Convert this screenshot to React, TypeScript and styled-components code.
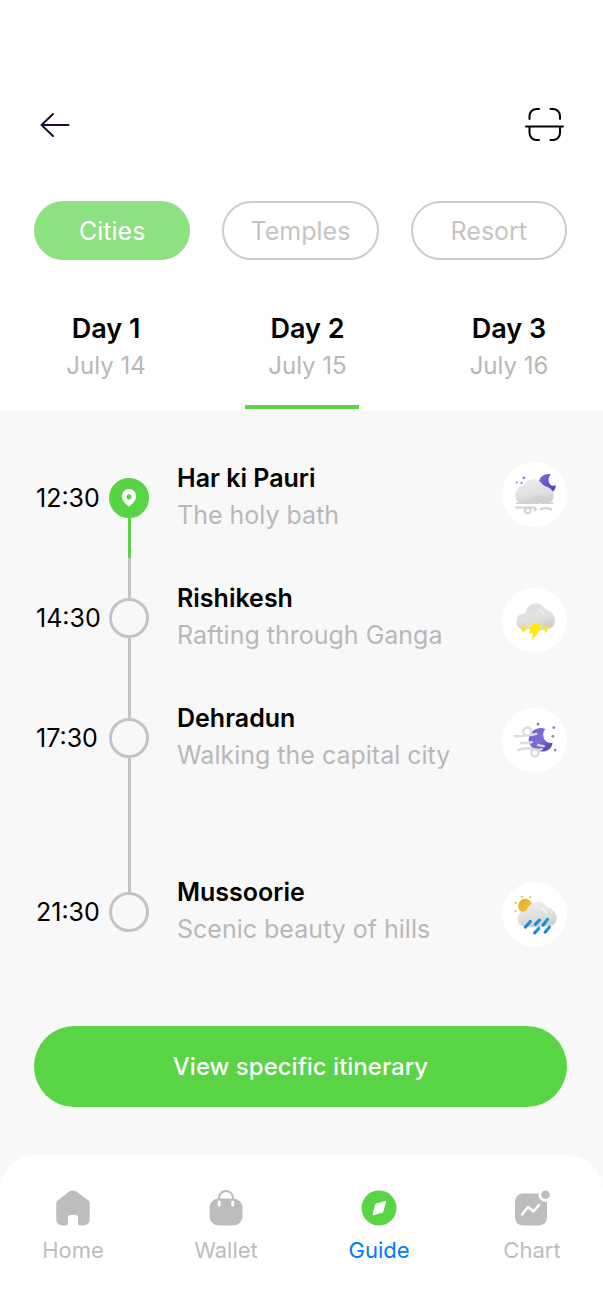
import React, { useState } from "react";
import styled, { createGlobalStyle } from "styled-components";

const GlobalStyle = createGlobalStyle`
  *, *::before, *::after { box-sizing: border-box; }
  body {
    margin: 0;
    background: #f8f8f8;
    color: #000;
    font-family: Inter, "Liberation Sans", sans-serif;
  }
  button { font: inherit; padding: 0; border: 0; background: none; cursor: pointer; }
`;

const Page = styled.div`
  display: flex;
  flex-direction: column;
  min-height: 100vh;
`;

const Top = styled.header`
  background: #fff;
  padding-top: 100px;
`;

const TopBar = styled.div`
  display: flex;
  justify-content: space-between;
  align-items: center;
  height: 50px;
  padding: 0 38px 0 36px;
`;

const IconButton = styled.button`
  display: flex;
`;

const Filters = styled.div`
  display: grid;
  grid-template-columns: repeat(3, 1fr);
  gap: 32px;
  padding: 51px 36px 0 34px;
`;

const Pill = styled.button<{ $active: boolean }>`
  height: 59px;
  border: 2px solid ${(p) => (p.$active ? "#8ee182" : "#cbcbcb")};
  border-radius: 30px;
  background: ${(p) => (p.$active ? "#8ee182" : "#fff")};
  color: ${(p) => (p.$active ? "#fff" : "#c4c4c4")};
  font-size: 25px;
  line-height: 36px;
`;

const Days = styled.div`
  display: flex;
  justify-content: space-between;
  padding: 50px 54px 0 66px;
`;

const Day = styled.button<{ $active: boolean }>`
  position: relative;
  display: flex;
  flex-direction: column;
  align-items: center;
  min-width: 80px;
  height: 101px;
  white-space: nowrap;

  &::after {
    content: "";
    display: ${(p) => (p.$active ? "block" : "none")};
    position: absolute;
    left: -23px;
    bottom: 2px;
    width: 114px;
    height: 4px;
    background: #59d444;
  }
`;

const DayName = styled.span`
  font-size: 27px;
  line-height: 37px;
  font-weight: 600;
`;

const DayDate = styled.span`
  font-size: 24px;
  line-height: 37px;
  color: #b8b8b8;
`;

const Schedule = styled.ol`
  list-style: none;
  margin: 0;
  padding: 49px 36px 0 36px;
`;

const Stop = styled.li<{ $long: boolean }>`
  display: grid;
  grid-template-columns: 73px 40px 1fr 65px;
  min-height: ${(p) => (p.$long ? 174 : 120)}px;
`;

const Time = styled.time`
  padding-top: 19px;
  font-size: 25px;
  line-height: 39px;
`;

const Track = styled.div`
  display: flex;
  flex-direction: column;
  align-items: center;
  padding-top: 18px;
`;

const Dot = styled.span<{ $active: boolean }>`
  display: flex;
  align-items: center;
  justify-content: center;
  width: 40px;
  height: 40px;
  border: 3px solid ${(p) => (p.$active ? "#59d444" : "#c4c4c4")};
  border-radius: 50%;
  background: ${(p) => (p.$active ? "#59d444" : "transparent")};
`;

const Connector = styled.span<{ $active: boolean }>`
  flex: 1;
  width: 3px;
  margin-bottom: -18px;
  background: ${(p) =>
    p.$active ? "linear-gradient(#59d444 50%, #c4c4c4 50%)" : "#c4c4c4"};
`;

const Place = styled.div`
  padding-left: 28px;
  line-height: 37px;
  font-size: 25px;
  white-space: nowrap;
`;

const PlaceName = styled.h2`
  margin: 0;
  font-size: 25px;
  font-weight: 600;
`;

const PlaceNote = styled.p`
  margin: 0;
  color: #b8b8b8;
`;

const Weather = styled.div<{ $offset: number }>`
  width: 65px;
  height: 65px;
  margin-top: ${(p) => p.$offset}px;
  border-radius: 50%;
  background: #fff;

  svg { display: block; width: 100%; height: 100%; }
`;

const Action = styled.div`
  display: flex;
  padding: 32px 36px 48px 34px;
`;

const PrimaryButton = styled.button`
  flex: 1;
  height: 81px;
  border-radius: 41px;
  background: #59d444;
  color: #fff;
  font-size: 24px;
  font-weight: 500;
`;

const NavBar = styled.nav`
  flex: 1;
  display: flex;
  justify-content: space-between;
  align-items: flex-start;
  min-height: 150px;
  padding: 35px 34px 0 36px;
  border-radius: 36px 36px 0 0;
  background: #fff;
`;

const NavLink = styled.a<{ $active: boolean }>`
  display: flex;
  flex-direction: column;
  align-items: center;
  gap: 8px;
  width: 74px;
  color: ${(p) => (p.$active ? "#007aff" : "#bdbdbd")};
  font-size: 22px;
  line-height: 33px;
  text-decoration: none;
`;

const FoggyNight = () => (
  <svg viewBox="38 36 193 193" aria-hidden="true">
    <defs>
      <linearGradient id="fogMoon" x1="0" y1="0" x2="1" y2="1">
        <stop offset="0" stopColor="#8069e2" />
        <stop offset="1" stopColor="#4f3bbd" />
      </linearGradient>
      <linearGradient id="fogCloud" x1="0" y1="0" x2="0.3" y2="1">
        <stop offset="0" stopColor="#efeff0" />
        <stop offset="0.7" stopColor="#e0e0e1" />
        <stop offset="1" stopColor="#cfcfd1" />
      </linearGradient>
    </defs>
    <path d="M183 72c-18-3-34 7-36 26 0 16 16 28 32 28 11 0 18-8 19-22-6 4-13 4-17-1-7-9-6-22 2-31Z" fill="url(#fogMoon)" />
    <g fill="#9278dc">
      <circle cx="103" cy="83" r="4" />
      <circle cx="82" cy="97" r="3" />
      <circle cx="96" cy="98" r="3" />
    </g>
    <path d="M96 157c-13-2-19-12-18-24 1-14 8-23 20-25 5-1 8-7 13-12 12-13 31-13 44 2 6 8 12 9 20 13 14 7 18 18 16 29-2 12-9 18-23 18Z" fill="url(#fogCloud)" />
    <path d="M82 158h60c-10-6-8-19 4-20 13-1 19 10 11 20h31" fill="none" stroke="#d1d1d3" strokeWidth="5" strokeLinecap="round" />
    <path d="M80 171h48c13 0 12 10 6 9M105 180c0-9 17-11 18 0 1 10-17 10-18 0M153 177c9-5 23-4 31 0" fill="none" stroke="#d2d2d3" strokeWidth="6" strokeLinecap="round" />
  </svg>
);

const Thunder = () => (
  <svg viewBox="38 35 193 193" aria-hidden="true">
    <defs>
      <linearGradient id="thunderCloud" x1="0" y1="0" x2="0.3" y2="1">
        <stop offset="0" stopColor="#dcdcdd" />
        <stop offset="0.6" stopColor="#e2e2e4" />
        <stop offset="1" stopColor="#cfcfd1" />
      </linearGradient>
      <radialGradient id="thunderGlow" cx="0.5" cy="0.7" r="0.5">
        <stop offset="0" stopColor="#fff2a0" />
        <stop offset="1" stopColor="#fff2a0" stopOpacity="0" />
      </radialGradient>
    </defs>
    <path d="M98 157c-12-2-18-12-17-25 1-13 9-20 22-21 5-1 5-7 9-14 12-20 38-21 51-3 5 7 12 7 20 13 10 7 13 17 12 28-1 13-9 20-22 20-8 2-12 4-22 4-9 0-14-3-22-3-11 0-17 4-31 1Z" fill="url(#thunderCloud)" />
    <ellipse cx="135" cy="144" rx="32" ry="17" fill="url(#thunderGlow)" />
    <path d="M148 101c7 0 10 8 16 12" fill="none" stroke="#f8f8f9" strokeWidth="4" strokeLinecap="round" opacity="0.7" />
    <g fill="#fdea0d" stroke="#fdea0d" strokeWidth="2" strokeLinejoin="round">
      <path d="m127 142 25 1-7 13h9l-27 33 4-21h-12Z" />
      <path d="M100 149h9l-2 10-6 9-2-8-3-1ZM166 149h9l-2 10-6 9-1-8-3-1Z" />
    </g>
  </svg>
);

const WindyNight = () => (
  <svg viewBox="38 38 193 193" aria-hidden="true">
    <defs>
      <linearGradient id="windMoon" x1="0" y1="0" x2="1" y2="1">
        <stop offset="0" stopColor="#7b68d2" />
        <stop offset="0.55" stopColor="#7c68d8" />
        <stop offset="1" stopColor="#4b35ad" />
      </linearGradient>
    </defs>
    <path d="M167 100c-23-8-44 5-49 25-4 20 10 37 29 41 21 5 39-6 41-25-7 2-15 0-20-5-10-10-10-27-1-36Z" fill="url(#windMoon)" />
    <g fill="#9278dc">
      <circle cx="145" cy="86" r="4" />
      <circle cx="192" cy="96" r="4" />
      <circle cx="189" cy="122" r="4" />
      <circle cx="196" cy="163" r="4" />
    </g>
    <g fill="none" stroke="#dcdcdf" strokeWidth="7" strokeLinecap="round">
      <path d="M75 121c21 3 40-1 65-6M122 116c8-12-1-21-11-20-10 2-14 11-7 20" />
      <path d="M95 142c11 1 21 0 31-3M86 163c17-7 29-7 42-3 11 3 20 5 28 0M145 148l17 3" />
      <circle cx="136" cy="171" r="11" />
    </g>
  </svg>
);

const SunnyRain = () => (
  <svg viewBox="38 36 193 193" aria-hidden="true">
    <defs>
      <linearGradient id="rainSun" x1="0" y1="0" x2="1" y2="1">
        <stop offset="0" stopColor="#d8aa37" />
        <stop offset="0.6" stopColor="#f2bd2c" />
        <stop offset="1" stopColor="#d8a224" />
      </linearGradient>
      <linearGradient id="rainCloud" x1="0" y1="0" x2="0.3" y2="1">
        <stop offset="0" stopColor="#f0f0f1" />
        <stop offset="0.6" stopColor="#e2e2e4" />
        <stop offset="1" stopColor="#d0d0d2" />
      </linearGradient>
    </defs>
    <circle cx="107" cy="107" r="21" fill="url(#rainSun)" />
    <g fill="#e5b42f">
      <circle cx="97" cy="80" r="3" />
      <circle cx="122" cy="81" r="3" />
      <circle cx="79" cy="98" r="3" />
      <circle cx="78" cy="123" r="3" />
    </g>
    <path d="M102 168c-13-2-18-13-17-25 1-12 8-19 20-20 7-2 7-7 12-14 14-18 36-21 50-4 6 8 14 7 22 14 10 8 13 18 11 29-2 12-10 19-24 19-28 3-43 6-74 1Z" fill="url(#rainCloud)" />
    <path d="M154 114c6 0 9 7 14 11" fill="none" stroke="#fafafa" strokeWidth="4" strokeLinecap="round" />
    <path d="m107 170 15-17M137 162l12-13M160 164l13-17M135 187l12-13M166 185l13-15" stroke="#0f86d6" strokeWidth="9" strokeLinecap="round" />
    <path d="m112 162 10-10M142 155l7-7M166 155l7-8M140 180l7-7M172 177l6-7" stroke="#299fe1" strokeWidth="3" strokeLinecap="round" />
  </svg>
);

const HomeIcon = () => (
  <svg width="36" height="36" viewBox="0 0 36 36" fill="#bdbdbd" aria-hidden="true">
    <path d="M14.5 1.6a6 6 0 0 1 6.8 0l11.2 8.2c1.6 1.2 2.2 2.1 2.2 3.8v16a6 6 0 0 1-6 6h-3.2a2.5 2.5 0 0 1-2.5-2.5v-5.5a2.5 2.5 0 0 0-2.5-2.5h-5a2.5 2.5 0 0 0-2.5 2.5v5.5a2.5 2.5 0 0 1-2.5 2.5H7.3a6 6 0 0 1-6-6v-16c0-1.7.6-2.6 2.2-3.8Z" />
  </svg>
);

const WalletIcon = () => (
  <svg width="36" height="36" viewBox="0 0 36 36" aria-hidden="true">
    <rect x="1.5" y="8.500" width="33" height="27" rx="9" fill="#bdbdbd" />
    <path d="M11 15V8a7 7 0 0 1 14 0v7" fill="none" stroke="#bdbdbd" strokeWidth="2" />
    <path d="M11.2 12v3M24.7 12v3" stroke="#fff" strokeWidth="3" strokeLinecap="round" />
  </svg>
);

const GuideIcon = () => (
  <svg width="36" height="36" viewBox="0 0 36 36" aria-hidden="true">
    <circle cx="18" cy="18" r="17.5" fill="#59d444" />
    <path d="M15 14.5 24.3 11.8 21.5 21.8 12.3 24.5Z" fill="#fff" stroke="#fff" strokeWidth="1.5" strokeLinejoin="round" />
  </svg>
);

const ChartIcon = () => (
  <svg width="36" height="36" viewBox="0 0 36 36" aria-hidden="true">
    <rect x="1" y="3.5" width="32" height="32" rx="8" fill="#bdbdbd" />
    <circle cx="31.5" cy="4.8" r="7" fill="#fff" />
    <circle cx="31.5" cy="4.8" r="4.3" fill="#bdbdbd" />
    <path d="m8 24.5 6-7.5 5.5 4.5 5.5-6.5" fill="none" stroke="#fff" strokeWidth="2.5" strokeLinecap="round" strokeLinejoin="round" />
  </svg>
);

const filters = ["Cities", "Temples", "Resort"];

const days = [
  { name: "Day 1", date: "July 14" },
  { name: "Day 2", date: "July 15" },
  { name: "Day 3", date: "July 16" },
];

const stops = [
  { time: "12:30", name: "Har ki Pauri", note: "The holy bath", weather: FoggyNight, offset: 2 },
  { time: "14:30", name: "Rishikesh", note: "Rafting through Ganga", weather: Thunder, offset: 8 },
  { time: "17:30", name: "Dehradun", note: "Walking the capital city", weather: WindyNight, offset: 8, long: true },
  { time: "21:30", name: "Mussoorie", note: "Scenic beauty of hills", weather: SunnyRain, offset: 8 },
];

const links = [
  { label: "Home", icon: HomeIcon },
  { label: "Wallet", icon: WalletIcon },
  { label: "Guide", icon: GuideIcon },
  { label: "Chart", icon: ChartIcon },
];

export default function App() {
  const [filter, setFilter] = useState("Cities");
  const [day, setDay] = useState("Day 2");

  return (
    <Page>
      <GlobalStyle />
      <Top>
        <TopBar>
          <IconButton aria-label="Back">
            <svg width="38" height="38" viewBox="0 0 38 38" fill="none" stroke="#200e32" strokeWidth="2" strokeLinecap="round" strokeLinejoin="round">
              <path d="M32.5 19H6M17 8 5.5 19 17 30" />
            </svg>
          </IconButton>
          <IconButton aria-label="Scan">
            <svg width="42" height="38" viewBox="0 0 42 38" fill="none" stroke="#000" strokeWidth="2" strokeLinecap="round">
              <path d="M3 20.5H40M6.500 13V10a7 7 0 0 1 7-7h2.500M27.500 3h2.500a7 7 0 0 1 7 7v3M6.500 21v6a7 7 0 0 0 7 7h2.500M27.500 34h2.500a7 7 0 0 0 7-7v-6" />
            </svg>
          </IconButton>
        </TopBar>
        <Filters>
          {filters.map((f) => (
            <Pill key={f} $active={f === filter} aria-pressed={f === filter} onClick={() => setFilter(f)}>
              {f}
            </Pill>
          ))}
        </Filters>
        <Days>
          {days.map((d) => (
            <Day key={d.name} $active={d.name === day} aria-pressed={d.name === day} onClick={() => setDay(d.name)}>
              <DayName>{d.name}</DayName>
              <DayDate>{d.date}</DayDate>
            </Day>
          ))}
        </Days>
      </Top>
      <main>
        <Schedule>
          {stops.map((s, i) => (
            <Stop key={s.time} $long={Boolean(s.long)}>
              <Time>{s.time}</Time>
              <Track>
                <Dot $active={i === 0}>
                  {i === 0 && (
                    <svg width="16" height="20" viewBox="0 0 16 20" aria-hidden="true">
                      <path fillRule="evenodd" d="M8 1a7 7 0 0 0-7.2 7c0 4.5 3.5 7.5 6.3 10.1.6.5 1.2.5 1.8 0C11.7 15.5 15.2 12.5 15.2 8A7 7 0 0 0 8 1Zm0 5.2a2.600 2.600 0 1 1 0 5.200 2.600 2.600 0 0 1 0-5.200Z" fill="#fff" />
                    </svg>
                  )}
                </Dot>
                {i < stops.length - 1 && <Connector $active={i === 0} />}
              </Track>
              <Place>
                <PlaceName>{s.name}</PlaceName>
                <PlaceNote>{s.note}</PlaceNote>
              </Place>
              <Weather $offset={s.offset}>
                <s.weather />
              </Weather>
            </Stop>
          ))}
        </Schedule>
        <Action>
          <PrimaryButton>View specific itinerary</PrimaryButton>
        </Action>
      </main>
      <NavBar>
        {links.map((l) => (
          <NavLink key={l.label} href={`#${l.label.toLowerCase()}`} $active={l.label === "Guide"}>
            <l.icon />
            {l.label}
          </NavLink>
        ))}
      </NavBar>
    </Page>
  );
}
